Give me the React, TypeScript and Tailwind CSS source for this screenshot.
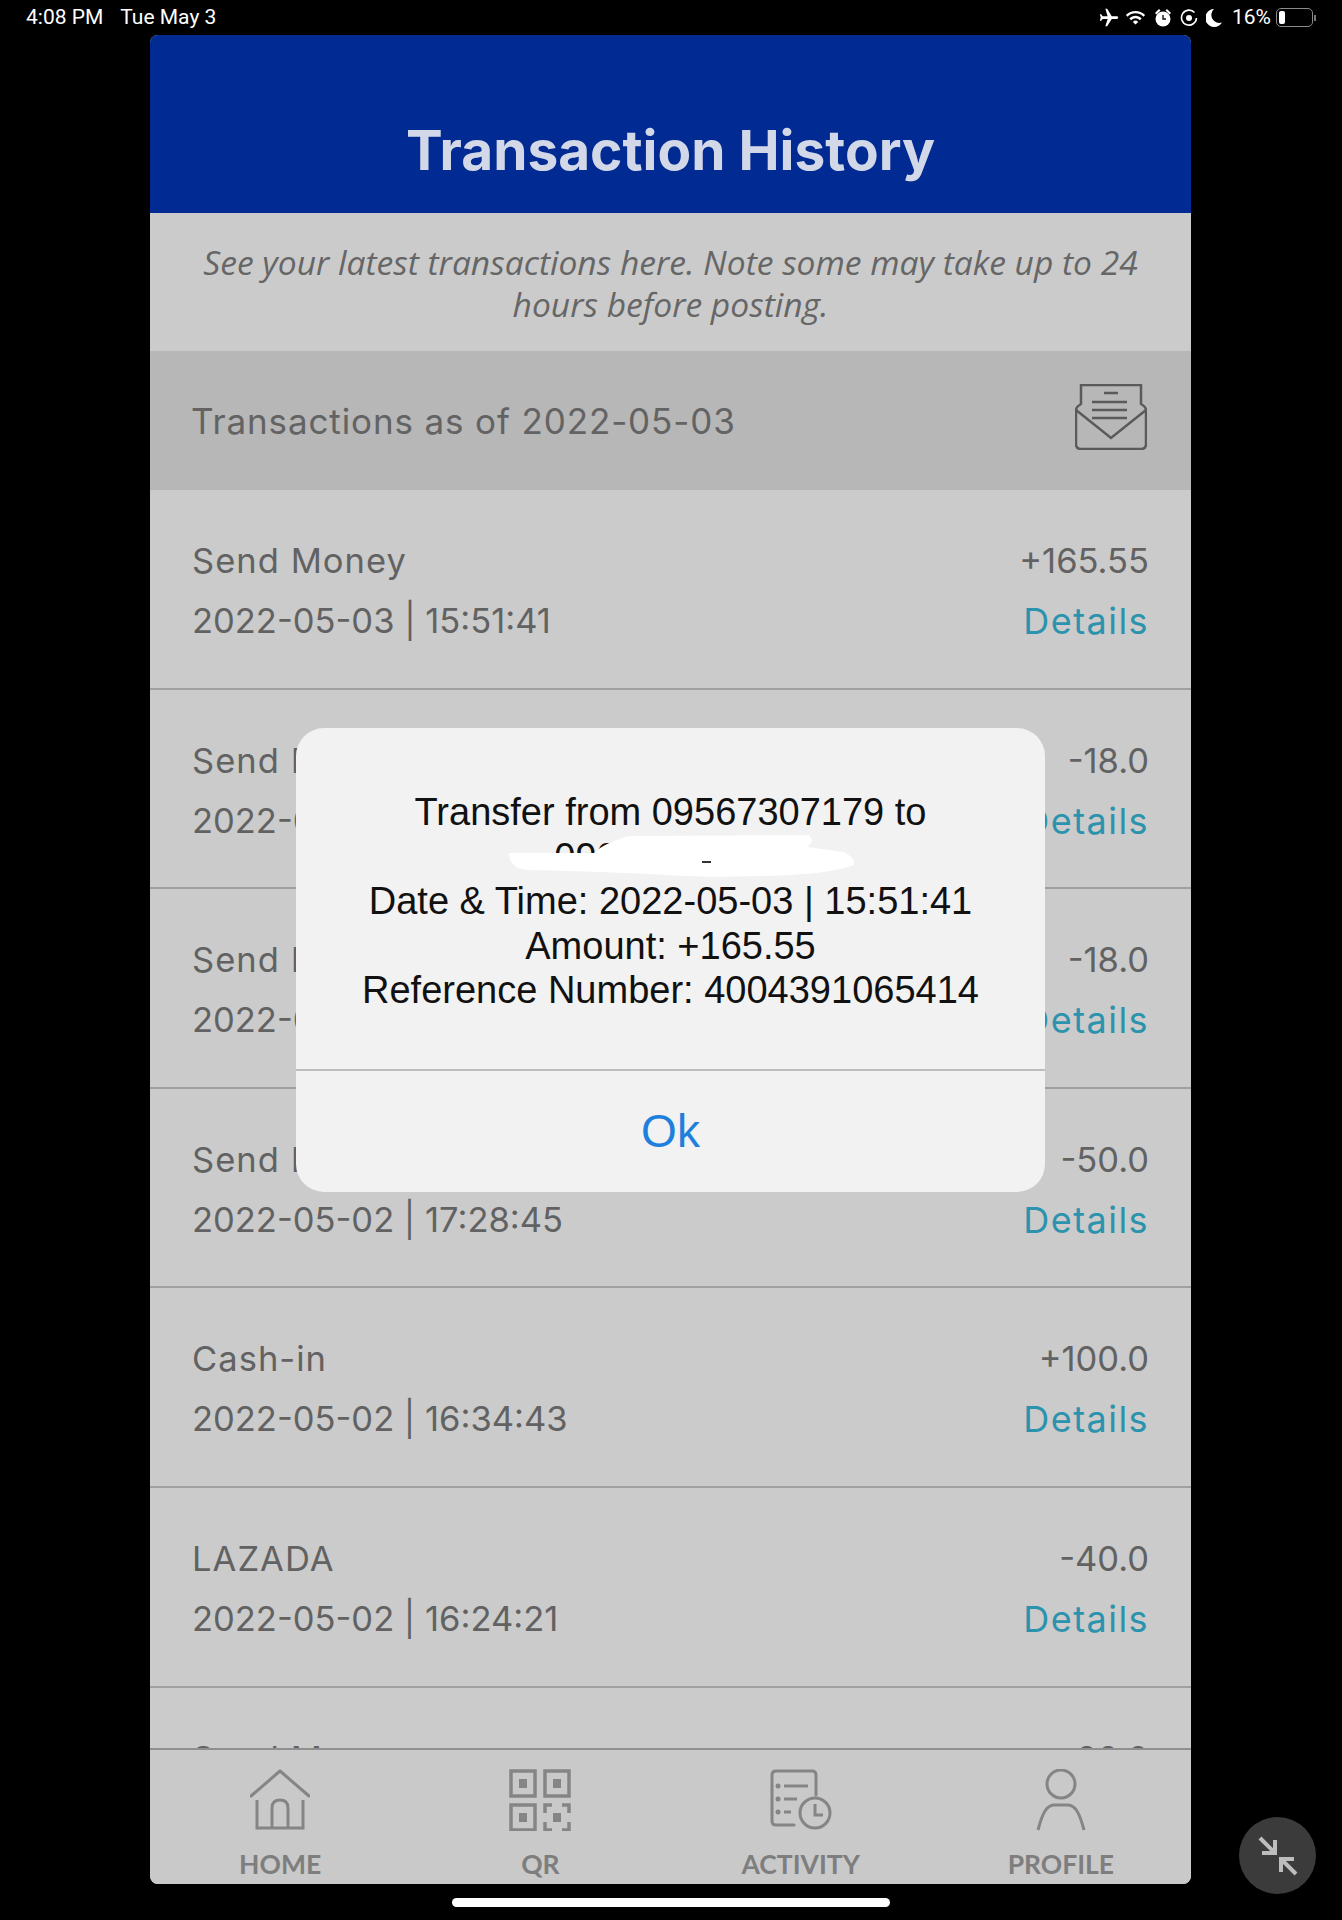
import React from 'react';
import { MdFlight, MdWifi } from 'react-icons/md';

const rows = [
  { title: 'Send Money', date: '2022-05-03 | 15:51:41', amount: '+165.55' },
  { title: 'Send Money', date: '2022-05-03 | 15:40:12', amount: '-18.0' },
  { title: 'Send Money', date: '2022-05-03 | 15:38:27', amount: '-18.0' },
  { title: 'Send Money', date: '2022-05-02 | 17:28:45', amount: '-50.0' },
  { title: 'Cash-in', date: '2022-05-02 | 16:34:43', amount: '+100.0' },
  { title: 'LAZADA', date: '2022-05-02 | 16:24:21', amount: '-40.0' },
  { title: 'Send Money', date: '2022-05-02 | 15:10:05', amount: '-20.0' },
];

const HomeIcon = () => (
  <svg width="60" height="62" viewBox="0 0 60 62" fill="none" stroke="#858585" strokeWidth="3">
    <path d="M1 27 L30 2 L59 27" strokeLinejoin="round" strokeLinecap="round" />
    <path d="M7 31 V59 H53 V31" />
    <path d="M22 59 V39 Q22 31 30 31 Q38 31 38 39 V59" />
  </svg>
);

const QrIcon = () => (
  <svg width="62" height="62" viewBox="0 0 62 62" fill="none" stroke="#858585" strokeWidth="3.5">
    <rect x="2" y="2" width="24" height="25" />
    <rect x="36" y="2" width="24" height="25" />
    <rect x="2" y="36" width="24" height="25" />
    <path d="M36 44 V36 H43 M53 36 H60 V44 M60 53 V61 H53 M43 61 H36 V53" />
    <g fill="#858585" stroke="none">
      <rect x="10" y="10" width="8" height="9" />
      <rect x="44" y="10" width="8" height="9" />
      <rect x="10" y="44" width="8" height="9" />
      <rect x="44" y="44" width="8" height="9" />
    </g>
  </svg>
);

const ActivityIcon = () => (
  <svg width="62" height="62" viewBox="0 0 62 62" fill="none" stroke="#858585" strokeWidth="3">
    <path d="M46 26 V6 Q46 2 42 2 H6 Q2 2 2 6 V52 Q2 56 6 56 H24" strokeLinecap="round" />
    <circle cx="45" cy="44" r="15" />
    <path d="M45 35 V46 H53" />
    <path d="M14 17 H38 M14 30 H27 M14 43 H21" />
    <g fill="#858585" stroke="none">
      <circle cx="8" cy="17" r="2.5" />
      <circle cx="8" cy="30" r="2.5" />
      <circle cx="8" cy="43" r="2.5" />
    </g>
  </svg>
);

const ProfileIcon = () => (
  <svg width="50" height="62" viewBox="0 0 50 62" fill="none" stroke="#858585" strokeWidth="3">
    <ellipse cx="25" cy="15" rx="14" ry="14" />
    <path d="M2 61 C6 46 10 36 18 36 H32 C40 36 44 46 48 61" />
  </svg>
);

const tabs = [
  { label: 'HOME', icon: <HomeIcon /> },
  { label: 'QR', icon: <QrIcon /> },
  { label: 'ACTIVITY', icon: <ActivityIcon /> },
  { label: 'PROFILE', icon: <ProfileIcon /> },
];

const StatusBar = () => (
  <div className="h-[35px] flex items-center justify-between pl-[26px] pr-[26px] text-white font-['Roboto',sans-serif] text-[21px]">
    <div className="flex gap-[17px]">
      <span>4:08 PM</span>
      <span>Tue May 3</span>
    </div>
    <div className="flex items-center">
      <MdFlight className="rotate-90 text-[22px]" />
      <MdWifi className="ml-[5px] text-[21px]" />
      <svg className="ml-[8px]" width="18" height="20" viewBox="0 0 18 20" fill="white">
        <circle cx="9" cy="11" r="7.5" />
        <path d="M1 5 L5 1 L6.5 2.5 L2.5 6.5 Z M17 5 L13 1 L11.5 2.5 L15.5 6.5 Z" />
        <path d="M9 7 V11 H12" fill="none" stroke="#111" strokeWidth="1.4" />
      </svg>
      <svg className="ml-[8px]" width="18" height="18" viewBox="0 0 18 18" fill="none" stroke="white" strokeWidth="1.6">
        <path d="M14.5 3.5 A7.5 7.5 0 1 0 16.5 9" />
        <circle cx="9" cy="9" r="3" fill="white" stroke="none" />
      </svg>
      <svg className="ml-[8px]" width="16" height="18" viewBox="0 0 16 18" fill="white">
        <path d="M8 0 A9 9 0 1 0 16 13.5 A8 8 0 0 1 8 0 Z" />
      </svg>
      <span className="ml-[10px] text-[21px]">16%</span>
      <div className="ml-[5px] flex items-center">
        <div className="w-[37px] h-[19px] rounded-[5px] border border-[#8a8a8a] p-[2px]">
          <div className="w-[6px] h-full rounded-[2px] bg-white" />
        </div>
        <div className="w-[2px] h-[6px] bg-[#777] ml-[1px]" />
      </div>
    </div>
  </div>
);

const TransactionRow = ({ title, date, amount }: { title: string; date: string; amount: string }) => (
  <div className="h-[199.6px] shrink-0 pt-[51px] pl-[42px] pr-[42px] border-b-[2px] border-[#a0a0a0] flex justify-between text-[#626262] text-[34.5px] leading-[40px] font-['Inter',sans-serif]">
    <div className="flex flex-col gap-[20px]">
      <span className="tracking-[0.03em]">{title}</span>
      <span>{date}</span>
    </div>
    <div className="flex flex-col gap-[20px] items-end">
      <span>{amount}</span>
      <span className="text-[#2b93ad] text-[36px] tracking-[0.04em]">Details</span>
    </div>
  </div>
);

const AlertModal = () => (
  <div className="absolute left-[296px] top-[728px] w-[749px] h-[464px] rounded-[28px] bg-[#f2f2f2] flex flex-col font-['Liberation_Sans',sans-serif]">
    <div className="h-[341px] shrink-0 pt-[62px] text-center text-[#111] text-[38px] leading-[44.5px] relative">
      <div>Transfer from 09567307179 to</div>
      <div>09000000000</div>
      <div>Date &amp; Time: 2022-05-03 | 15:51:41</div>
      <div>Amount: +165.55</div>
      <div>Reference Number: 4004391065414</div>
      <svg className="absolute left-[213px] top-[107px]" width="346" height="43" viewBox="0 0 346 43">
        <path d="M0 18 L85 18 Q95 8 120 1 L300 0 Q306 6 298 12 L335 17 Q346 22 345 30 Q320 40 250 41 Q200 43 160 40 Q80 36 20 35 Q0 34 0 18 Z" fill="white" />
        <rect x="193" y="26" width="9" height="2" fill="#333" />
      </svg>
    </div>
    <div className="flex-1 border-t-[2px] border-[#bdbdbd] flex items-center justify-center text-[46px] text-[#1f7fdc]">
      Ok
    </div>
  </div>
);

export default function App() {
  return (
    <div className="relative w-[1342px] h-[1920px] bg-black overflow-hidden font-['Noto_Sans',sans-serif]">
      <StatusBar />
      <div className="ml-[150px] w-[1041px] h-[1849px] rounded-[8px] overflow-hidden bg-[#cbcbcb] flex flex-col">
        <div className="h-[178px] shrink-0 bg-[#012b92] flex justify-center pt-[83px]">
          <h1 className="text-[#d3d8e8] text-[55px] leading-[64px] font-bold font-['Inter',sans-serif]">
            Transaction History
          </h1>
        </div>
        <div className="h-[138px] shrink-0 pt-[28px] px-[45px] bg-[#cbcbcb] text-center italic text-[#666] text-[33.6px] leading-[42px] font-['Open_Sans',sans-serif]">
          See your latest transactions here. Note some may take up to 24 hours before posting.
        </div>
        <div className="h-[139px] shrink-0 bg-[#b7b7b7] flex items-center justify-between pl-[41px] pr-[44px] pt-[2px] text-[#636363] text-[35px] tracking-[0.025em] font-['Inter',sans-serif]">
          <span>Transactions as of 2022-05-03</span>
          <svg className="-mt-[10px]" width="72" height="66" viewBox="0 0 72 66" fill="none" stroke="#5a5a5a" strokeWidth="2.5">
            <path d="M1 26 Q1 23 6 20 V1 H66 V20 Q71 23 71 26 V60 Q71 65 66 65 H6 Q1 65 1 60 Z" strokeLinejoin="round" />
            <path d="M1 26 L36 54 L71 26" />
            <path d="M29 9 H43 M17 18 H52 M17 26 H52 M17 34 H52" />
          </svg>
        </div>
        <div className="flex-1 min-h-0 overflow-hidden flex flex-col">
          {rows.map((row, i) => (
            <TransactionRow key={i} {...row} />
          ))}
        </div>
        <div className="h-[136px] shrink-0 border-t-[2px] border-[#8f8f8f] bg-[#c9c9c9] grid grid-cols-4 pt-[19px]">
          {tabs.map(tab => (
            <div key={tab.label} className="flex flex-col items-center">
              <div className="h-[62px] flex items-center">{tab.icon}</div>
              <span className="mt-[17px] text-[26.5px] leading-[32px] font-bold text-[#7e7e7e] font-['Lato',sans-serif]">{tab.label}</span>
            </div>
          ))}
        </div>
      </div>
      <div className="mt-[14px] ml-[452px] w-[438px] h-[9px] rounded-full bg-white" />
      <AlertModal />
      <div className="absolute left-[1239px] top-[1817px] w-[77px] h-[77px] rounded-full bg-[#3b3b3b] flex items-center justify-center">
        <svg width="40" height="40" viewBox="0 0 40 40" fill="none" stroke="#bdbdbd" strokeWidth="4">
          <path d="M2 2 L16 16 M4 17 H17 V4" />
          <path d="M38 38 L24 24 M23 36 V23 H36" />
        </svg>
      </div>
    </div>
  );
}
